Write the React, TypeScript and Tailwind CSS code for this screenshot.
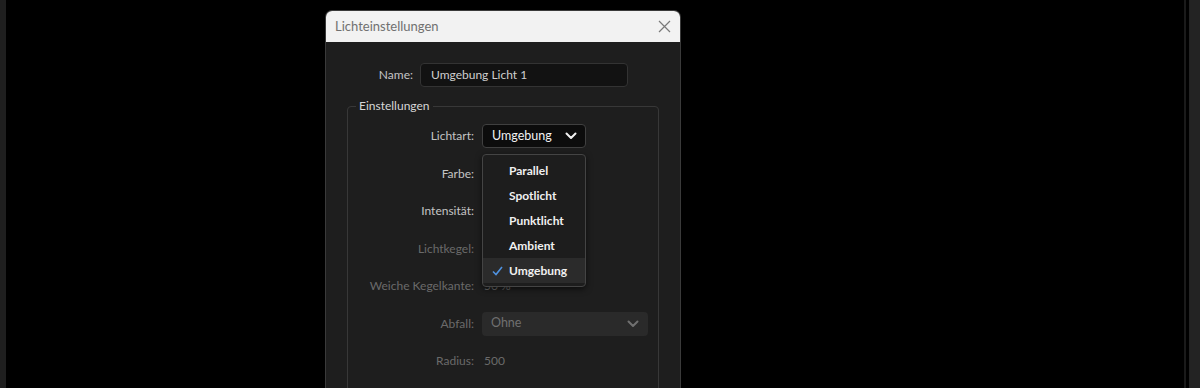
import React from "react";

const font = { fontFamily: "Lato, 'Noto Sans', sans-serif" };

function Chevron({ color, className }: { color: string; className?: string }) {
  return (
    <svg width="12" height="8" viewBox="0 0 12 8" className={className}>
      <path d="M1.5 1.5 L6 6 L10.5 1.5" fill="none" stroke={color} strokeWidth="2" strokeLinecap="round" strokeLinejoin="round" />
    </svg>
  );
}

function Row({ label, dim, children }: { label: string; dim?: boolean; children?: React.ReactNode }) {
  return (
    <div className="flex h-6 items-center">
      <div className={`w-[126px] text-right text-[12px] ${dim ? "text-[#6a6a6a]" : "text-[#c4c4c4]"}`}>{label}</div>
      <div className="ml-[8px] flex flex-1 items-center">{children}</div>
    </div>
  );
}

export default function App() {
  const items = ["Parallel", "Spotlicht", "Punktlicht", "Ambient", "Umgebung"];
  return (
    <div className="flex h-[388px] w-[1200px] overflow-hidden bg-black" style={font}>
      <div className="h-full w-[6px] shrink-0 bg-[#1f1f1f]" />
      <div className="ml-[319px] mt-[10px] flex h-[378px] w-[356px] shrink-0 flex-col overflow-hidden rounded-t-[7px] border border-b-0 border-[#3a3a3a]">
        <div className="flex h-[31px] shrink-0 items-center justify-between bg-[#f2f2f2] pl-[9px] pr-[9px]">
          <span className="text-[13px] text-[#707070]">Lichteinstellungen</span>
          <svg width="13" height="13" viewBox="0 0 13 13">
            <path d="M1 1 L12 12 M12 1 L1 12" stroke="#7a7a7a" strokeWidth="1.2" />
          </svg>
        </div>
        <div className="flex flex-1 flex-col bg-[#1e1e1e]">
          <div className="mt-[21px] flex h-6 shrink-0 items-center">
            <div className="w-[87px] text-right text-[12px] text-[#c4c4c4]">Name:</div>
            <div className="ml-[7px] flex h-6 w-[208px] items-center rounded-[4px] border border-[#333333] bg-[#121212] pl-[10px] text-[12px] text-[#cfcfcf]">
              Umgebung Licht 1
            </div>
          </div>
          <fieldset className="relative mx-[21px] mt-[11px] shrink-0 rounded-[4px] border border-[#383838] pb-6 pt-[10px]">
            <legend className="ml-[8px] px-[3px] text-[12px] leading-4 text-[#d6d6d6]">Einstellungen</legend>
            <div className="flex flex-col gap-[13.5px]">
              <Row label="Lichtart:">
                <div className="relative">
                  <div className="flex h-6 w-[104px] items-center justify-between rounded-[4px] border border-[#404040] bg-[#0c0c0c] pl-[9px] pr-[8px] text-[12.5px] text-[#f2f2f2]">
                    <span>Umgebung</span>
                    <Chevron color="#f0f0f0" />
                  </div>
                  <div className="absolute left-0 top-[30px] z-10 w-[104px] rounded-[4px] border border-[#444444] bg-[#1d1d1d] py-[3px] shadow-[0_2px_6px_rgba(0,0,0,0.6)]">
                    {items.map((it) => {
                      const sel = it === "Umgebung";
                      return (
                        <div key={it} className={`flex h-[25px] items-center ${sel ? "bg-[#2b2b2b]" : ""}`}>
                          <div className="flex w-[26px] items-center justify-center pl-[2px]">
                            {sel && (
                              <svg width="11" height="10" viewBox="0 0 11 10">
                                <path d="M1 5.5 L4 8.5 L10 1" fill="none" stroke="#4f92e0" strokeWidth="1.6" />
                              </svg>
                            )}
                          </div>
                          <span className="text-[12px] font-bold text-[#f0f0f0]">{it}</span>
                        </div>
                      );
                    })}
                  </div>
                </div>
              </Row>
              <Row label="Farbe:" />
              <Row label="Intensität:" />
              <Row label="Lichtkegel:" dim />
              <Row label="Weiche Kegelkante:" dim>
                <span className="ml-[2px] text-[12px] text-[#6a6a6a]">50 %</span>
              </Row>
              <Row label="Abfall:" dim>
                <div className="flex h-6 w-[166px] items-center justify-between rounded-[4px] bg-[#2a2a2a] pl-[9px] pr-[9px] text-[12.5px] text-[#707070]">
                  <span>Ohne</span>
                  <Chevron color="#707070" />
                </div>
              </Row>
              <Row label="Radius:" dim>
                <span className="ml-[2px] text-[12px] text-[#6a6a6a]">500</span>
              </Row>
            </div>
          </fieldset>
        </div>
      </div>
      <div className="ml-[503px] h-full w-[2px] shrink-0 bg-[#1a1a1a]" />
      <div className="ml-[3px] h-full flex-1 bg-[#232323]" />
    </div>
  );
}
